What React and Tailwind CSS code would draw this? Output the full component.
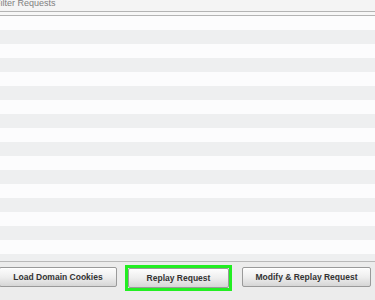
import React from 'react';

const ROWS = Array.from({ length: 18 }, (_, i) => i);

function Button({ children, className = '' }) {
  return (
    <button
      className={`h-[20px] border border-[#9a9a9a] rounded-[2px] bg-gradient-to-b from-[#fdfdfd] via-[#eeeeee] to-[#d6d6d6] text-[8.5px] font-bold text-[#333] shadow-[inset_0_1px_0_#ffffff] ${className}`}
    >
      {children}
    </button>
  );
}

export default function App() {
  return (
    <div className="w-[375px] h-[300px] overflow-hidden bg-[#eeeeee] flex flex-col font-['Liberation_Sans',Arial,sans-serif]">
      {/* titled frame label, cut at the left edge */}
      <div className="h-[11px] bg-[#f4f4f4] overflow-hidden">
        <span className="block -ml-[5px] -mt-[2px] text-[9px] leading-[11px] text-[#808080]">
          Filter Requests
        </span>
      </div>
      <div className="h-[5px] border-t border-b border-[#b4b4b4] bg-[#f7f7f7]" />

      {/* request table */}
      <div className="h-[245px] overflow-hidden bg-white">
        {ROWS.map(i => (
          <div
            key={i}
            className={`h-[14px] ${i % 2 === 0 ? 'bg-[#fcfcfd]' : 'bg-[#eeeff0]'}`}
          />
        ))}
      </div>

      {/* button bar */}
      <div className="flex-1 border-t border-[#b9b9b9] bg-[#ececec] flex items-start pt-[5px]">
        <Button className="w-[118px] -ml-[1px]">Load Domain Cookies</Button>
        <div className="ml-[8px] -mt-[2px] border-[3px] border-[#22ee22] flex">
          <Button className="w-[101px]">Replay Request</Button>
        </div>
        <Button className="ml-[10px] w-[129px]">Modify &amp; Replay Request</Button>
      </div>
    </div>
  );
}
